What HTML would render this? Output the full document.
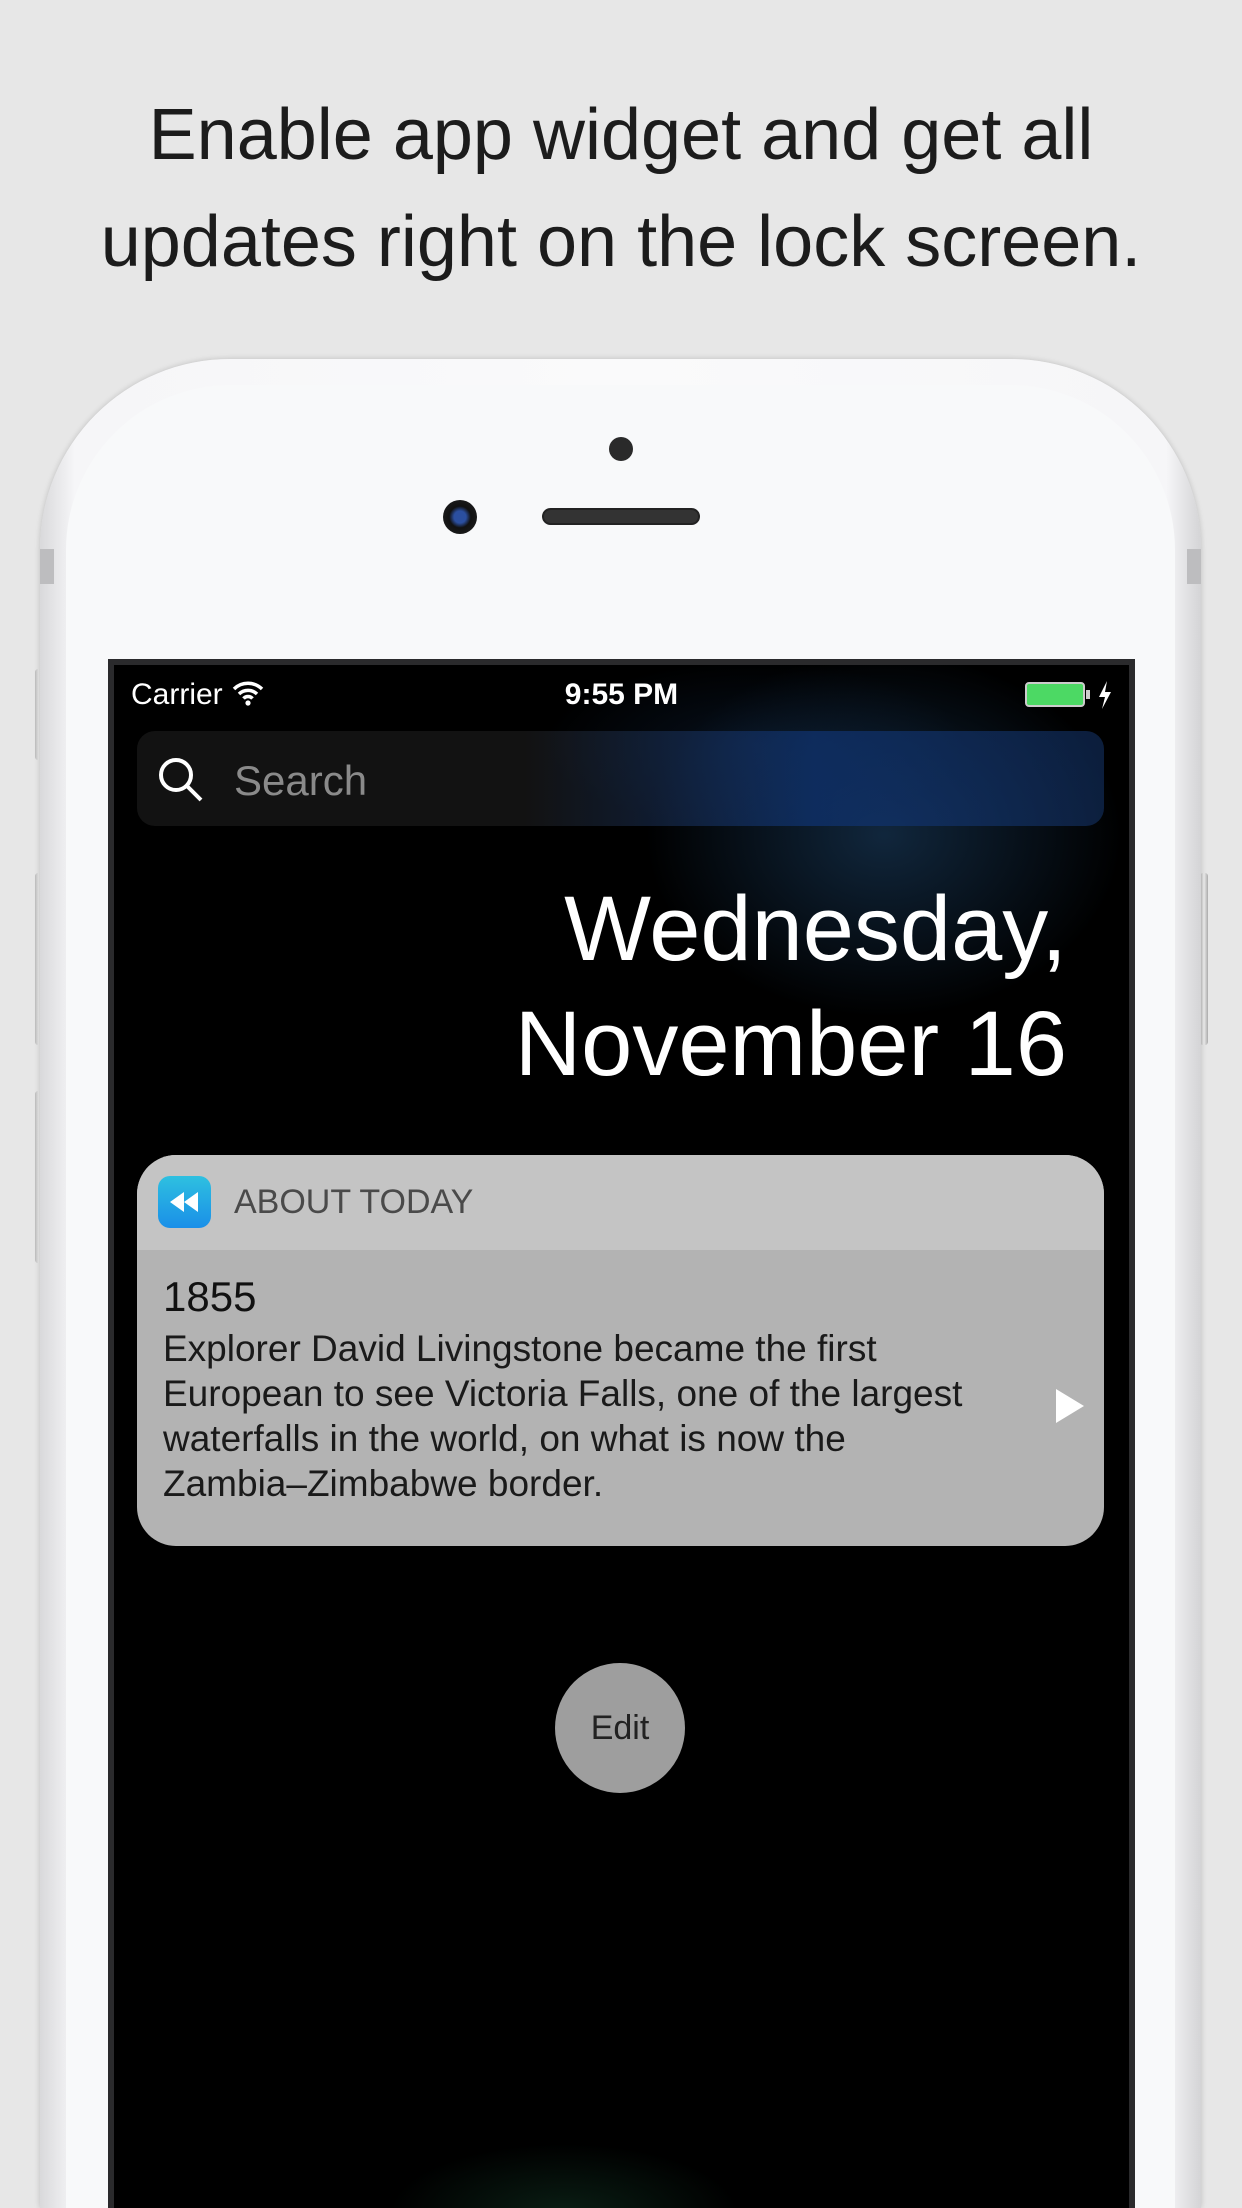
<!DOCTYPE html>
<html style="width:1242px;height:2208px;overflow:hidden"><head><meta charset="utf-8"><style>
*{margin:0;padding:0;box-sizing:border-box}
html,body{width:1242px;height:2208px;overflow:hidden}
body{background:#e7e7e7;position:relative;font-family:"Liberation Sans",sans-serif}
.h{position:absolute;left:0;width:1242px;text-align:center;color:#1c1c1c;font-size:72px;font-weight:300}
.phone{position:absolute;left:40px;top:359px;width:1161px;height:1849px;border-radius:190px 190px 0 0;background:linear-gradient(90deg,#d9d9db,#f6f6f8 3%,#fafafb 50%,#f6f6f8 97%,#d4d4d6);box-shadow:0 0 6px rgba(0,0,0,.18);overflow:hidden}
.inner{position:absolute;left:26px;top:26px;right:26px;bottom:0;border-radius:165px 165px 0 0;background:#f8f9fa}
.band{position:absolute;top:549px;height:35px;width:14px;background:#bdbdbf}
.btn{position:absolute;width:8px;background:linear-gradient(90deg,#bbb,#eee,#aaa);border-radius:3px}
.screen{position:absolute;left:108px;top:659px;width:1027px;height:1549px;background:#000;border:6px solid #2a2a2c;border-bottom:none;overflow:hidden}
.glow{position:absolute;left:0;top:0;width:100%;height:100%;background:radial-gradient(ellipse 340px 260px at 770px 170px,rgba(30,70,110,.55),transparent 70%),radial-gradient(ellipse 300px 120px at 640px 80px,rgba(20,50,90,.3),transparent 70%),radial-gradient(ellipse 250px 100px at 450px 1549px,rgba(20,60,40,.5),transparent 70%)}
.w{color:#fff;position:absolute}
</style></head><body>
<div class="h" style="top:94px">Enable app widget and get all</div>
<div class="h" style="top:201px">updates right on the lock screen.</div>
<div class="btn" style="left:35px;top:669px;height:91px"></div>
<div class="btn" style="left:35px;top:873px;height:172px"></div>
<div class="btn" style="left:35px;top:1091px;height:172px"></div>
<div class="btn" style="left:1200px;top:873px;height:172px"></div>
<div class="phone"><div class="inner"></div></div>
<div class="band" style="left:40px"></div><div class="band" style="left:1187px"></div>
<div style="position:absolute;left:609px;top:437px;width:24px;height:24px;border-radius:50%;background:#2a2a2a"></div>
<div style="position:absolute;left:443px;top:500px;width:34px;height:34px;border-radius:50%;background:radial-gradient(circle,#2b4fa0 25%,#111 45%,#222 100%)"></div>
<div style="position:absolute;left:542px;top:508px;width:158px;height:17px;border-radius:9px;background:#333;border:2px solid #222"></div>
<div class="screen">
<div class="glow"></div>
<div class="w" style="left:17px;top:13px;font-size:30px">Carrier
<svg width="34" height="26" viewBox="0 0 34 26" style="vertical-align:-2px"><path d="M3 9a20 20 0 0 1 28 0M8 14a13 13 0 0 1 18 0M12.5 18.5a6 6 0 0 1 9 0" stroke="#fff" stroke-width="3.5" fill="none"/><circle cx="17" cy="23" r="2.6" fill="#fff"/></svg></div>
<div class="w" style="left:0;width:1015px;text-align:center;top:13px;font-size:30px;font-weight:bold">9:55 PM</div>
<div style="position:absolute;left:911px;top:17px;width:60px;height:25px;border:2px solid #ccc;border-radius:4px;background:#4cd964"></div>
<div style="position:absolute;left:972px;top:25px;width:4px;height:9px;background:#ccc"></div>
<svg style="position:absolute;left:983px;top:15px" width="16" height="30" viewBox="0 0 16 30"><path d="M10 1L2 17h6l-3 12 9-17H8z" fill="#fff"/></svg>
<div style="position:absolute;left:23px;top:66px;width:967px;height:95px;border-radius:18px;background:linear-gradient(90deg,rgba(40,40,40,.45) 40%,rgba(15,50,110,.75) 70%,rgba(20,50,100,.6))"></div>
<svg style="position:absolute;left:42px;top:90px" width="50" height="50" viewBox="0 0 50 50"><circle cx="20" cy="20" r="15" stroke="#fff" stroke-width="4" fill="none"/><path d="M31 31l14 14" stroke="#fff" stroke-width="4"/></svg>
<div style="position:absolute;left:120px;top:92px;font-size:42px;color:#8a8a8a">Search</div>
<div class="w" style="right:62px;top:207px;font-size:92px;font-weight:300;text-align:right;line-height:115px">Wednesday,<br>November 16</div>
<div style="position:absolute;left:23px;top:490px;width:967px;height:391px;border-radius:39px;overflow:hidden;background:#b3b3b3">
<div style="height:95px;background:#c4c4c4;position:relative">
<div style="position:absolute;left:21px;top:21px;width:53px;height:52px;border-radius:12px;background:linear-gradient(#2ec0e0,#1a8fe8)"><svg width="53" height="52" viewBox="0 0 53 52"><path d="M26 16L12 26l14 10zM40 16L26 26l14 10z" fill="#fff"/></svg></div>
<div style="position:absolute;left:97px;top:28px;font-size:34px;color:#4a4a4a">ABOUT TODAY</div></div>
<div style="position:absolute;left:26px;top:118px;font-size:42px;color:#111">1855</div>
<div style="position:absolute;left:26px;top:171px;font-size:37px;line-height:45px;color:#1a1a1a;white-space:nowrap">Explorer David Livingstone became the first<br>European to see Victoria Falls, one of the largest<br>waterfalls in the world, on what is now the<br>Zambia–Zimbabwe border.</div>
<svg style="position:absolute;left:917px;top:232px" width="32" height="38"><path d="M2 2L30 19L2 36z" fill="#fff"/></svg>
</div>
<div style="position:absolute;left:441px;top:998px;width:130px;height:130px;border-radius:50%;background:#9e9e9e;color:#222;font-size:34px;text-align:center;line-height:130px">Edit</div>
</div>
</body></html>
